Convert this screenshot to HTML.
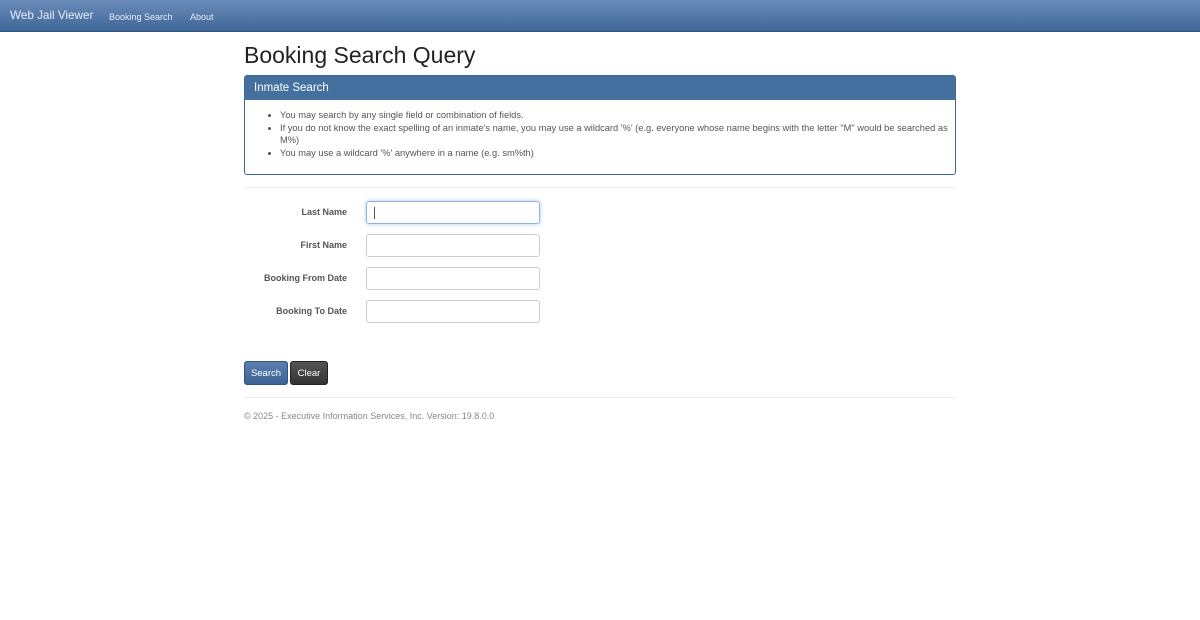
<!DOCTYPE html>
<html><head><style>
body{margin:0;font-family:"Liberation Sans",sans-serif;color:#333;background:#fff;width:1200px;height:620px;overflow:hidden}
.nav{height:31px;background:linear-gradient(#6a8cba,#3f6797);border-bottom:1px solid #2f5480;position:relative}
.nav span{position:absolute;color:#e6edf5;white-space:nowrap}
h1{position:absolute;left:244px;top:42px;margin:0;font-weight:normal;font-size:23px;color:#222}
.panel{position:absolute;left:244px;top:75px;width:710px;height:98px;border:1px solid #3f6797;border-radius:3px}
.ph{height:24px;background:#44709f;color:#fff;font-size:11.5px;line-height:24px;padding-left:9px}
ul{margin:9px 0 0;padding-left:35px;padding-right:2px;font-size:9.3px;color:#555;line-height:12.5px}
hr{position:absolute;left:244px;width:712px;margin:0;border:0;border-top:1px solid #eee}
.l{position:absolute;width:103px;left:244px;text-align:right;font-weight:bold;font-size:9px;color:#555}
.i{position:absolute;left:366px;width:172px;height:21px;border:1px solid #ccc;border-radius:3px}
.b{position:absolute;top:361px;height:22px;border-radius:3px;color:#fff;font-size:9.5px;line-height:24px;text-align:center}
</style></head><body>
<div class="nav"><span style="left:10px;top:9px;font-size:11.7px">Web Jail Viewer</span><span style="left:109px;top:12px;font-size:9px">Booking Search</span><span style="left:190px;top:12px;font-size:9px">About</span></div>
<h1>Booking Search Query</h1>
<div class="panel"><div class="ph">Inmate Search</div><ul>
<li>You may search by any single field or combination of fields.</li>
<li>If you do not know the exact spelling of an inmate's name, you may use a wildcard '%' (e.g. everyone whose name begins with the letter "M" would be searched as M%)</li>
<li>You may use a wildcard '%' anywhere in a name (e.g. sm%th)</li></ul></div>
<hr style="top:187px">
<div class="l" style="top:207px">Last Name</div>
<div class="i" style="top:201px;border-color:#8fb3e0;box-shadow:0 0 4px #a9c8ee"><div style="position:absolute;left:7px;top:5px;width:1px;height:12px;background:#555"></div></div>
<div class="l" style="top:240px">First Name</div><div class="i" style="top:234px"></div>
<div class="l" style="top:273px">Booking From Date</div><div class="i" style="top:267px"></div>
<div class="l" style="top:306px">Booking To Date</div><div class="i" style="top:300px"></div>
<div class="b" style="left:244px;width:42px;background:linear-gradient(#5a80b0,#3c6394);border:1px solid #2f5480">Search</div>
<div class="b" style="left:290px;width:36px;background:linear-gradient(#555,#333);border:1px solid #222">Clear</div>
<hr style="top:397px">
<div style="position:absolute;left:244px;top:411px;font-size:9px;color:#888">© 2025 - Executive Information Services, Inc. Version: 19.8.0.0</div>
</body></html>
